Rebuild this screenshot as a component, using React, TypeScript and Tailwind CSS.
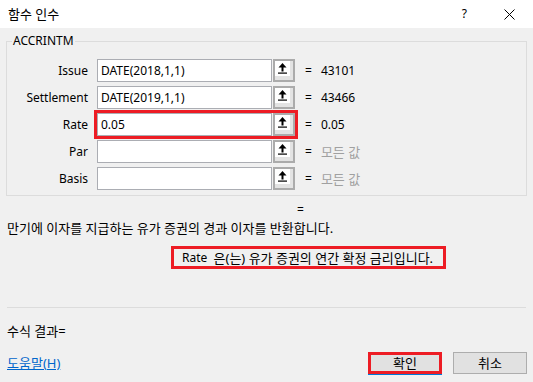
import React from "react";

const FONT = '"Noto Sans", "Noto Sans CJK KR", sans-serif';

function RefButton() {
  return (
    <div className="w-[22px] h-[23px] border-2 border-[#ababab] bg-[#e3e3e3] flex">
      <div className="w-[15px] h-[15px] bg-white flex items-center justify-center">
        <svg width="9" height="11" viewBox="0 0 9 11">
          <polygon points="4.5,0 8.5,4.5 0.5,4.5" fill="#000" />
          <rect x="3.5" y="4" width="2" height="4.5" fill="#000" />
          <rect x="0" y="9.5" width="9" height="1.2" fill="#000" />
        </svg>
      </div>
    </div>
  );
}

type Row = { label: string; value: string; result: string; muted?: boolean; hl?: boolean };

const rows: Row[] = [
  { label: "Issue", value: "DATE(2018,1,1)", result: "43101" },
  { label: "Settlement", value: "DATE(2019,1,1)", result: "43466" },
  { label: "Rate", value: "0.05", result: "0.05", hl: true },
  { label: "Par", value: "", result: "모든 값", muted: true },
  { label: "Basis", value: "", result: "모든 값", muted: true },
];

export default function App() {
  return (
    <div
      className="w-[533px] h-[382px] bg-[#f0f0f0] text-[12px] text-black flex flex-col overflow-hidden"
      style={{ fontFamily: FONT }}
    >
      {/* title bar */}
      <div className="h-[28px] bg-white flex items-center pl-[8px] pr-[18px] shrink-0">
        <span className="text-[13px] leading-[16px]">함수 인수</span>
        <span className="ml-auto text-[12px] leading-[16px] mr-[37px]">?</span>
        <svg width="11" height="11" viewBox="0 0 11 11">
          <line x1="0.5" y1="0.5" x2="10.5" y2="10.5" stroke="#000" strokeWidth="1" />
          <line x1="10.5" y1="0.5" x2="0.5" y2="10.5" stroke="#000" strokeWidth="1" />
        </svg>
      </div>

      {/* group box */}
      <div className="relative mt-[13px] mx-[6px] border border-[#dcdcdc] pt-[17px] pb-[5px]">
        <span className="absolute -top-[9px] left-[5px] bg-[#f0f0f0] px-[1px] leading-[16px]">
          ACCRINTM
        </span>
        <div className="flex flex-col gap-[4px]">
          {rows.map((r) => (
            <div key={r.label} className="flex items-center h-[23px]">
              <span className="w-[81px] text-right leading-[16px]">{r.label}</span>
              <div
                className={
                  "ml-[9px] flex gap-[1px] " +
                  (r.hl ? "outline-[3px] outline-solid outline-[#ed1c24] outline-offset-[0px]" : "")
                }
              >
                <div className="w-[175px] h-[23px] bg-white border border-[#abadb3] flex items-center px-[3px] leading-[16px]">
                  {r.value}
                </div>
                <RefButton />
              </div>
              <span className="ml-[10px] leading-[16px]">=</span>
              <span
                className={
                  "ml-[9px] leading-[16px] " + (r.muted ? "text-[#a0a0a0] text-[13px]" : "")
                }
              >
                {r.result}
              </span>
            </div>
          ))}
        </div>
      </div>

      <div className="mt-[6px] pl-[297px] leading-[16px]">=</div>
      <div className="mt-[2px] pl-[7px] leading-[16px] text-[13px]">
        만기에 이자를 지급하는 유가 증권의 경과 이자를 반환합니다.
      </div>
      <div className="mt-[10px] ml-[171px] w-[275px] h-[23px] border-[3px] border-[#ed1c24] flex items-center pl-[8px] leading-[16px] whitespace-pre">
        <span>{"Rate  "}</span>
        <span className="text-[13px]">은(는) 유가 증권의 연간 확정 금리입니다.</span>
      </div>

      <div className="mt-[38px] mx-[7px] h-[1px] bg-[#dcdcdc]" />
      <div className="mt-[15px] pl-[7px] leading-[16px] text-[13px]">수식 결과=</div>

      <div className="mt-[13px] flex items-center pl-[7px] pr-[6px]">
        <span className="text-[#0066cc] underline leading-[16px] text-[13px]">도움말(H)</span>
        <div className="ml-auto h-[22px] w-[74px] border-[3px] border-[#ed1c24] bg-[#e1e1e1] flex items-center justify-center leading-[16px] text-[13px] shadow-[0_1px_0_#0078d7]">
          확인
        </div>
        <div className="ml-[11px] h-[22px] w-[74px] border border-[#adadad] bg-[#e1e1e1] flex items-center justify-center leading-[16px] text-[13px]">
          취소
        </div>
      </div>
    </div>
  );
}
